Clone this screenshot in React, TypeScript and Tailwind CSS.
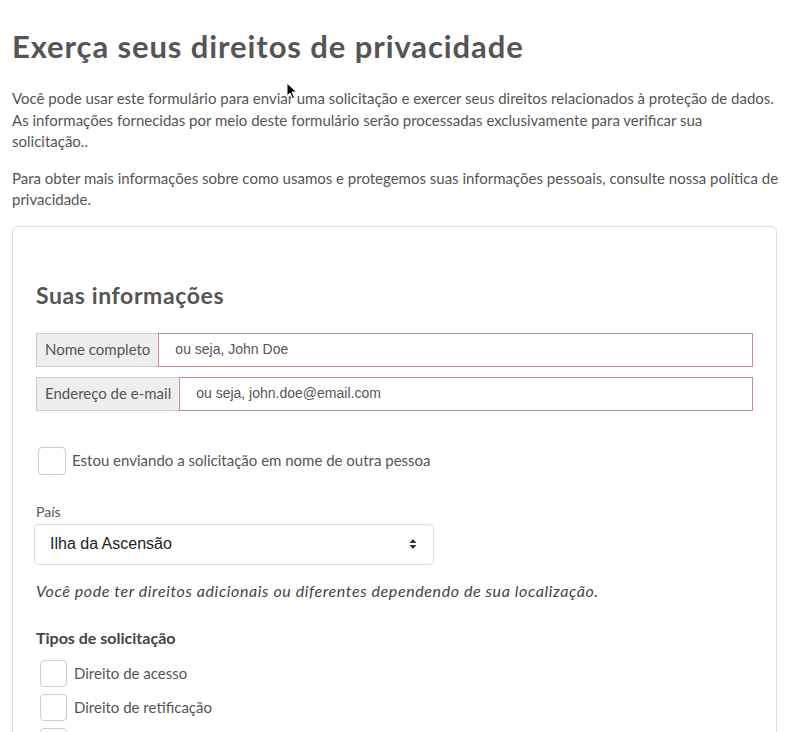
import { useState } from 'react'

// mouse pointer captured in the screenshot
const Cursor = () => (
  <svg
    className="absolute left-[286px] top-[82px] pointer-events-none"
    width="12"
    height="18"
    viewBox="0 0 12 18"
  >
    <path d="M1 1 L1 14 L4 11 L6.5 16.5 L8.5 15.5 L6 10 L10.5 10 Z" fill="#000" stroke="#fff" strokeWidth="1" />
  </svg>
)

const SelectArrows = () => (
  <svg width="8" height="12" viewBox="0 0 8 12" className="text-[#333]">
    <path d="M4 1 L7.5 5 H0.5 Z" fill="currentColor" />
    <path d="M4 11 L7.5 7 H0.5 Z" fill="currentColor" />
  </svg>
)

export default function App() {
  const [onBehalf, setOnBehalf] = useState(false)
  const [types, setTypes] = useState<string[]>([])

  const requestTypes = ['Direito de acesso', 'Direito de retificação', 'Direito de exclusão']

  const toggleType = (t: string) =>
    setTypes((prev) => (prev.includes(t) ? prev.filter((x) => x !== t) : [...prev, t]))

  return (
    <div className="relative min-h-screen bg-white font-['Lato',sans-serif] text-[#555] overflow-hidden h-[732px]">
      <Cursor />
      <div className="px-3 pt-[26px]">
        <h1 className="text-[31px] leading-[40px] font-bold text-[#555] tracking-[0.9px]">
          Exerça seus direitos de privacidade
        </h1>

        <p className="mt-[22px] text-[15px] leading-[21.5px] text-[#555]">
          Você pode usar este formulário para enviar uma solicitação e exercer seus direitos relacionados à proteção de dados.
          As informações fornecidas por meio deste formulário serão processadas exclusivamente para verificar sua solicitação..
        </p>
        <p className="mt-[15px] text-[15px] leading-[21.5px] text-[#555]">
          Para obter mais informações sobre como usamos e protegemos suas informações pessoais, consulte nossa política de privacidade.
        </p>

        {/* Form card */}
        <div className="mt-[15px] mr-[3px] border border-[#ddd] rounded-[5px] px-[23px] pt-[54px] pb-10">
          <h2 className="text-[23px] leading-[28px] font-bold text-[#555] tracking-[0.6px]">Suas informações</h2>

          <div className="mt-[24px] flex flex-col gap-[10px]">
            <div className="flex h-[34px]">
              <span className="flex items-center px-[8px] bg-[#eee] border border-[#ccc] border-r-0 rounded-l-[2px] text-[15px] text-[#555]">
                Nome completo
              </span>
              <input
                className="flex-1 border border-[#d08a8a] border-t-[#999] px-4 text-[14px] font-['Liberation_Sans',sans-serif] text-[#555] placeholder:text-[#555] outline-none"
                placeholder="ou seja, John Doe"
              />
            </div>
            <div className="flex h-[34px]">
              <span className="flex items-center px-[8px] bg-[#eee] border border-[#ccc] border-r-0 rounded-l-[2px] text-[15px] text-[#555]">
                Endereço de e-mail
              </span>
              <input
                className="flex-1 border border-[#d08a8a] border-b-[#999] px-4 text-[14px] font-['Liberation_Sans',sans-serif] text-[#555] placeholder:text-[#555] outline-none"
                placeholder="ou seja, john.doe@email.com"
              />
            </div>
          </div>

          <label className="mt-[36px] ml-[2px] flex items-center gap-[6px] cursor-pointer">
            <button
              type="button"
              onClick={() => setOnBehalf(!onBehalf)}
              className="w-[28px] h-[28px] border border-[#ccc] rounded-[4px] bg-white flex items-center justify-center text-[#555]"
            >
              {onBehalf ? '✓' : ''}
            </button>
            <span className="text-[15px] text-[#555]">Estou enviando a solicitação em nome de outra pessoa</span>
          </label>

          <div className="mt-[28px]">
            <div className="text-[14px] leading-[18px] text-[#555]">País</div>
            <div className="mt-[3px] -ml-[2px] w-[400px] h-[41px] border border-[#ddd] rounded-[4px] flex items-center justify-between pl-[15px] pr-[16px]">
              <span className="text-[16px] font-['Liberation_Sans',sans-serif] text-[#222]">Ilha da Ascensão</span>
              <SelectArrows />
            </div>
          </div>

          <p className="mt-[14px] text-[16px] italic text-[#444] tracking-[0.6px]">
            Você pode ter direitos adicionais ou diferentes dependendo de sua localização.
          </p>

          <h3 className="mt-[23px] text-[16px] font-bold text-[#444]">Tipos de solicitação</h3>
          <div className="mt-[10px] flex flex-col gap-[7px]">
            {requestTypes.map((t) => (
              <label key={t} className="ml-[4px] flex items-center gap-[7px] cursor-pointer">
                <button
                  type="button"
                  onClick={() => toggleType(t)}
                  className="w-[27px] h-[27px] border border-[#ccc] rounded-[4px] bg-white flex items-center justify-center text-[#555]"
                >
                  {types.includes(t) ? '✓' : ''}
                </button>
                <span className="text-[15px] text-[#555]">{t}</span>
              </label>
            ))}
          </div>
        </div>
      </div>
    </div>
  )
}
